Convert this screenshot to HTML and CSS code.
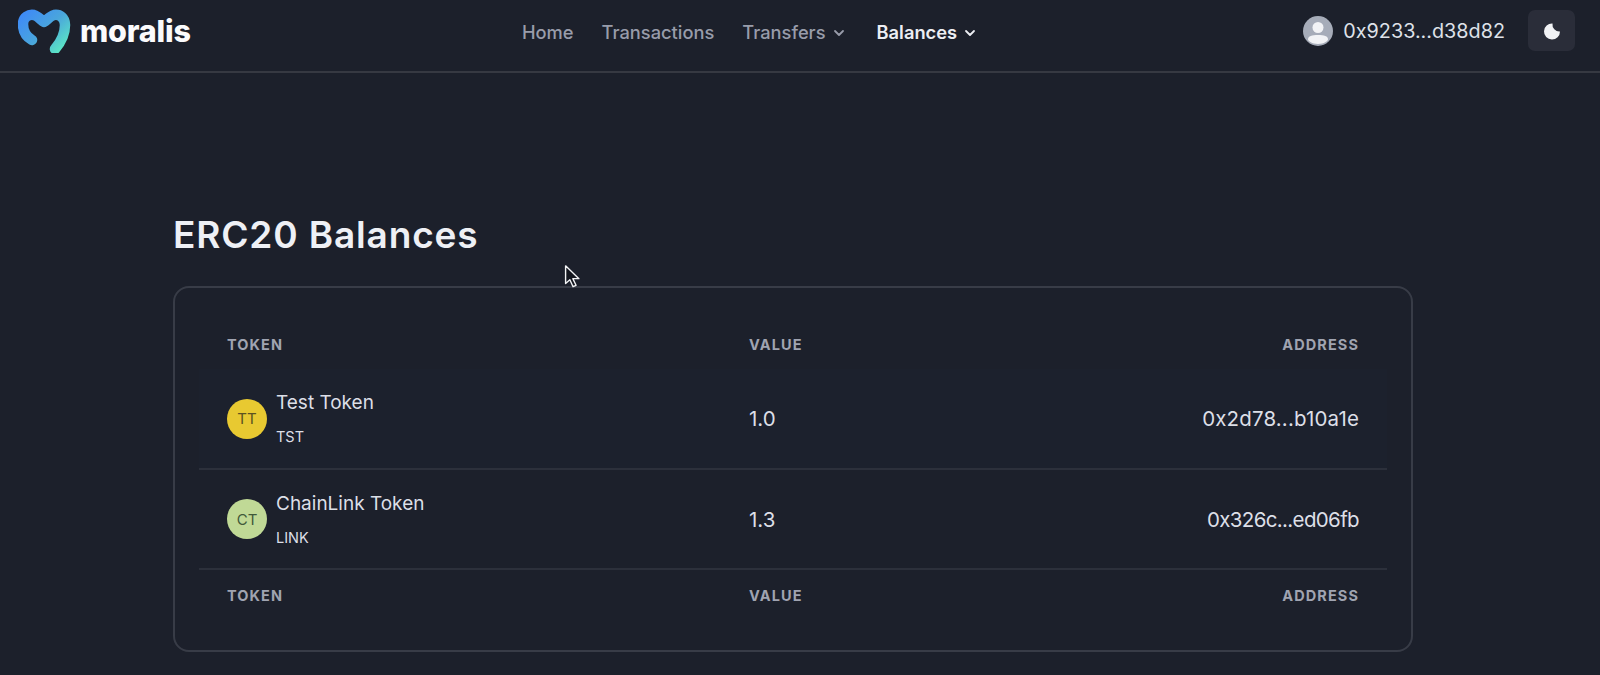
FILE: index.html
```html
<!DOCTYPE html>
<html lang="en">
<head>
<meta charset="utf-8">
<title>ERC20 Balances</title>
<link rel="stylesheet" href="styles.css">
</head>
<body>
<header class="topbar">
  <a class="brand">
    <svg class="brand-mark" width="54" height="44" viewBox="0 0 54 44" fill="none">
      <defs>
        <linearGradient id="mg" x1="8" y1="4" x2="44" y2="42" gradientUnits="userSpaceOnUse">
          <stop offset="0" stop-color="#3f8cf5"/>
          <stop offset="0.5" stop-color="#4aa6dc"/>
          <stop offset="1" stop-color="#5ce8c4"/>
        </linearGradient>
      </defs>
      <path d="M14 31C7 27 5 20 5 15C5 8 11 5 16 6C20 7 23 11 26 13C29 11 32 7 36 6C42 5 47 9 47 16C47 25 43 33 37 40" stroke="url(#mg)" stroke-width="10.5" stroke-linecap="round" stroke-linejoin="round"/>
    </svg>
    <span class="brand-name">moralis</span>
  </a>
  <nav class="nav">
    <a class="nav-link">Home</a>
    <a class="nav-link">Transactions</a>
    <a class="nav-link">Transfers
      <svg class="chev" width="12" height="8" viewBox="0 0 12 8" fill="none"><path d="M2 2l4 4 4-4" stroke="currentColor" stroke-width="1.8" stroke-linecap="round" stroke-linejoin="round"/></svg>
    </a>
    <a class="nav-link active">Balances
      <svg class="chev" width="12" height="8" viewBox="0 0 12 8" fill="none"><path d="M2 2l4 4 4-4" stroke="currentColor" stroke-width="1.8" stroke-linecap="round" stroke-linejoin="round"/></svg>
    </a>
  </nav>
  <div class="account">
    <span class="avatar-user">
      <svg width="30" height="30" viewBox="0 0 30 30"><circle cx="15" cy="15" r="15" fill="#a6acb9"/><circle cx="15" cy="11.500" r="5.500" fill="#f2f3f6"/><path d="M5 23.500C5 20 9 19 15 19s10 1 10 4.500c0 1.500-4 4.500-10 4.500s-10-3-10-4.500z" fill="#f2f3f6"/></svg>
    </span>
    <span class="address">0x9233...d38d82</span>
    <button class="theme-btn" aria-label="Toggle theme">
      <svg width="18" height="18" viewBox="0 0 18 18"><path d="M9.500 1.500A8 8 0 1 0 17 9.500A7 7 0 0 1 9.500 1.500z" fill="#f1f2f5"/></svg>
    </button>
  </div>
</header>
<main class="page">
  <h1 class="title">ERC20 Balances</h1>
  <section class="card">
    <table class="table">
      <thead>
        <tr><th class="col-token">Token</th><th class="col-value">Value</th><th class="col-address">Address</th></tr>
      </thead>
      <tbody>
        <tr class="row-tint">
          <td>
            <div class="token">
              <span class="token-badge yellow">TT</span>
              <div class="token-text"><span class="token-name">Test Token</span><span class="token-symbol">TST</span></div>
            </div>
          </td>
          <td>1.0</td>
          <td class="col-address addr-wide">0x2d78...b10a1e</td>
        </tr>
        <tr>
          <td>
            <div class="token">
              <span class="token-badge green">CT</span>
              <div class="token-text"><span class="token-name">ChainLink Token</span><span class="token-symbol">LINK</span></div>
            </div>
          </td>
          <td>1.3</td>
          <td class="col-address addr-tight">0x326c...ed06fb</td>
        </tr>
      </tbody>
      <tfoot>
        <tr><th class="col-token">Token</th><th class="col-value">Value</th><th class="col-address">Address</th></tr>
      </tfoot>
    </table>
  </section>
  <svg class="cursor" width="16" height="24" viewBox="0 0 15 22"><path d="M1.500 1.500V18l4-3.500 3 6.500 2.800-1.300-3-6.200H14z" fill="#14171f" stroke="#f2f3f5" stroke-width="1.300" stroke-linejoin="round"/></svg>
</main>
</body>
</html>
```

FILE: styles.css
```css
* { box-sizing: border-box; }
html, body { height: 100%; }
body {
  margin: 0;
  background: #1c202b;
  color: #e2e5ec;
  font-family: Inter, "Liberation Sans", sans-serif;
  overflow: hidden;
}
.topbar {
  height: 73px;
  display: flex;
  align-items: center;
  justify-content: space-between;
  padding: 0 25px 10px 18px;
  border-bottom: 2px solid #363942;
}
.brand { display: flex; align-items: center; gap: 8px; }
.brand-mark { display: block; }
.brand-name {
  font-family: Inter, sans-serif;
  font-size: 30.500px;
  font-weight: 800;
  color: #fbfbfd;
  letter-spacing: -0.2px;
}
.nav { display: flex; align-items: center; gap: 28px; padding-top: 3px; margin-left: 4px; }
.nav-link {
  display: flex;
  align-items: center;
  gap: 7px;
  font-size: 18.300px;
  font-weight: 500;
  color: #989caa;
}
.nav-link.active { color: #eceef3; font-weight: 600; gap: 7px; margin-left: 4px; }
.chev { margin-top: 2px; }
.account { display: flex; align-items: center; }
.avatar-user { display: block; width: 30px; height: 30px; margin-right: 10px; }
.avatar-user svg { display: block; }
.address { font-size: 19.800px; color: #dfe2e9; margin-right: 23px; }
.theme-btn {
  width: 47px;
  height: 41px;
  border: 0;
  border-radius: 7px;
  background: #2a2d39;
  display: flex;
  align-items: center;
  justify-content: center;
  padding: 0;
}
.page { position: relative; padding: 140px 0 0 173px; }
.title {
  margin: 0 0 29px;
  font-size: 37px;
  line-height: 44px;
  font-weight: 600;
  color: #eef0f5;
  letter-spacing: 0.85px;
}
.card {
  width: 1240px;
  height: 366px;
  padding: 23px 24px;
  border: 2px solid #383c47;
  border-radius: 16px;
}
.table { width: 100%; border-collapse: collapse; table-layout: fixed; }
.table th {
  padding: 0 28px;
  height: 52px;
  font-size: 14.500px;
  font-weight: 700;
  letter-spacing: 1.1px;
  text-transform: uppercase;
  text-align: left;
  color: #a0a4b1;
}
.table thead th { height: 58px; padding-top: 8px; }
.table td {
  padding: 0 28px;
  height: 100px;
  font-size: 20.500px;
  color: #dcdfe7;
  border-bottom: 2px solid #2c303b;
}
.table .col-token { width: 522px; }
.table .col-address { text-align: right; }
.table .addr-wide { letter-spacing: 0.15px; }
.table .addr-tight { letter-spacing: -0.65px; }
.row-tint { background: rgba(26, 44, 84, 0.06); }
.token { display: flex; align-items: center; gap: 9px; }
.token-badge {
  width: 40px;
  height: 40px;
  border-radius: 50%;
  display: flex;
  align-items: center;
  justify-content: center;
  font-size: 15px;
  flex: none;
}
.yellow { background: #e8c931; color: #5c5220; }
.green { background: #c0d996; color: #40593a; }
.token-text { display: flex; flex-direction: column; gap: 13px; }
.token-name { font-size: 19px; line-height: 24px; color: #dcdfe7; }
.token-symbol { font-size: 14.500px; line-height: 18px; color: #dcdfe7; }
.cursor { position: absolute; left: 564px; top: 191px; }
```
